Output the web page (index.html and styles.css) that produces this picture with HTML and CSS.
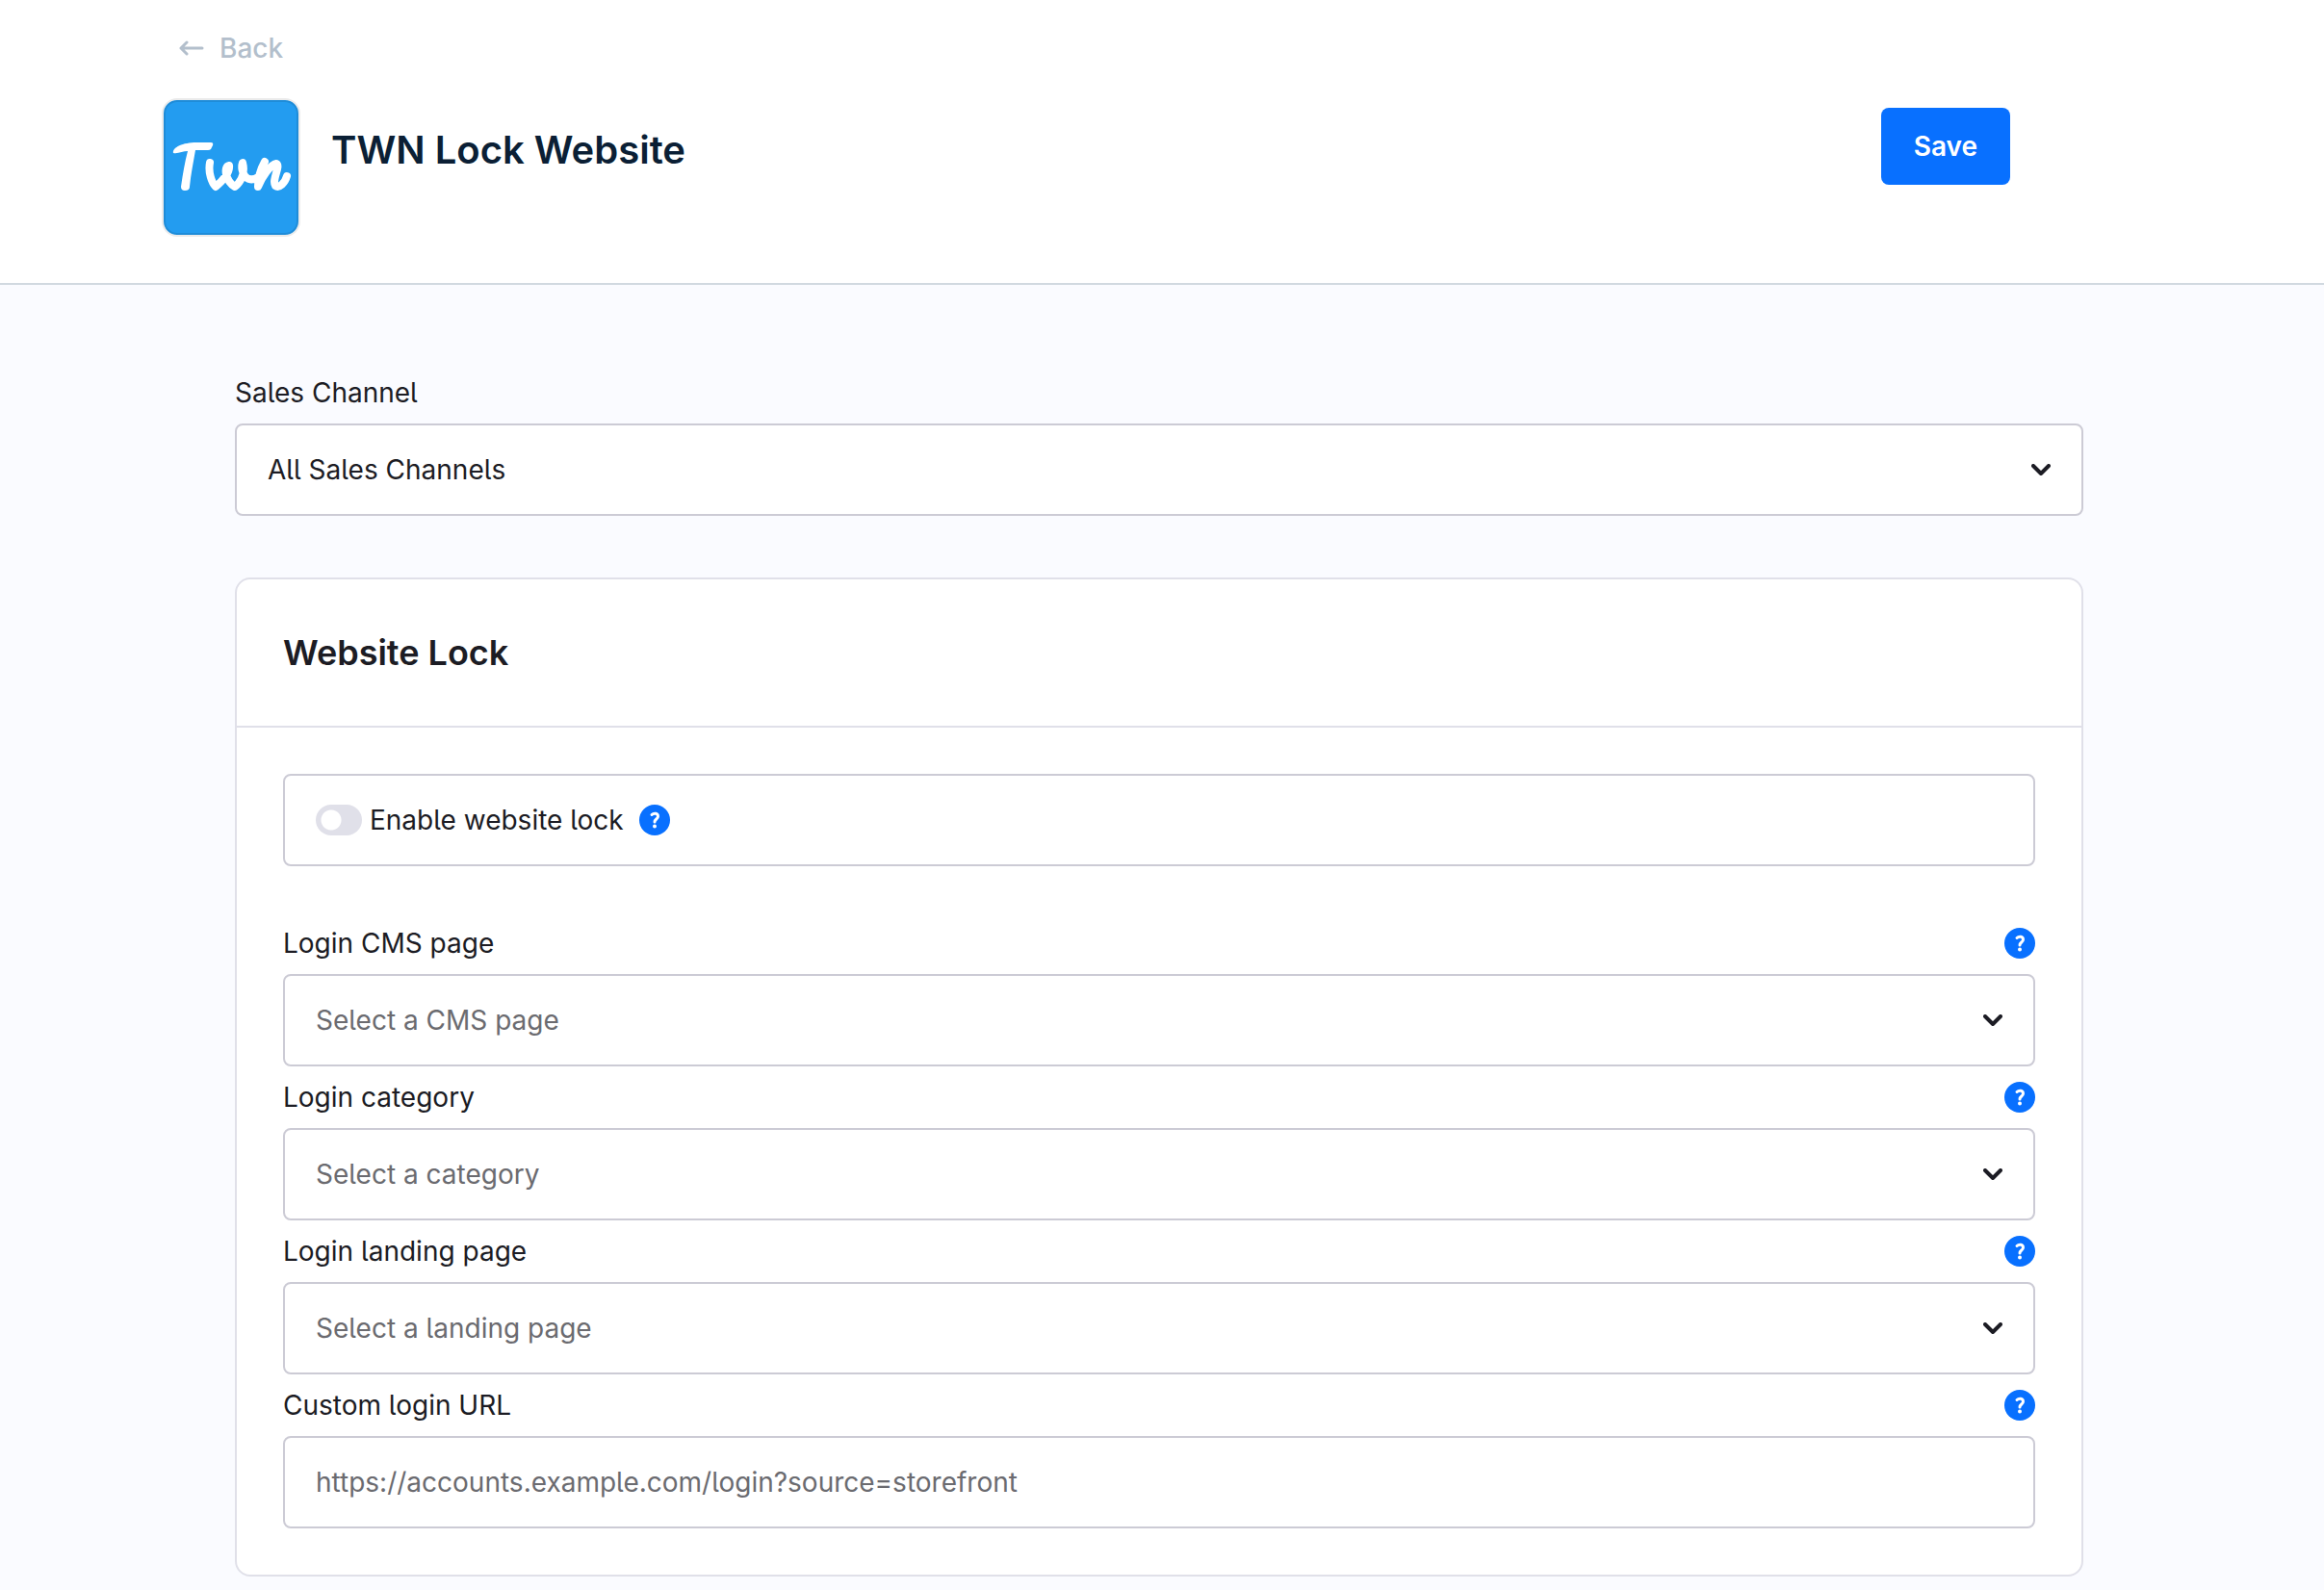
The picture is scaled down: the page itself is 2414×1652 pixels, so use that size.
FILE: index.html
```html
<!DOCTYPE html>
<html lang="en">
  <head>
    <meta charset="UTF-8">
    <title>TWN Lock Website</title>
    <link rel="stylesheet" href="styles.css">
  </head>

  <body>
    <header class="page-header">
      <a href="#" class="back-link">
        <svg class="back-arrow" viewBox="0 0 26 16" aria-hidden="true">
          <path d="M8 2 2 8l6 6M2 8h22"/>
        </svg>
        Back
      </a>

      <div class="header-row">
        <svg class="app-icon" viewBox="0 0 140 140" role="img" aria-label="Twn">
          <path class="logo-t" d="M10 55C9 49 20 44 34 44L49 44Q52 44 51 47L49 51Q48 52 46 52L33 52C31 64 28 78 27 90Q27 94 22 94Q18 94 18 90C20 76 22 64 25 53C20 53 15 56 10 55Z"/>
          <path class="logo-wn" d="M48 65C46 75 50 86 54 90C61 84 69 76 68 68C62 69 64 84 74 90C80 85 85 76 82 65C79 74 86 88 98 80M105 64C100 73 98 81 98 90C102 80 111 67 117 66C122 68 112 83 116 89C120 92 126 86 128 79"/>
        </svg>
        <h1 class="page-title">TWN Lock Website</h1>
        <button type="submit" form="lock-form" class="save-btn">Save</button>
      </div>
    </header>

    <main class="content">
      <form id="lock-form" class="lock-form">
        <div class="field">
          <div class="field-top">
            <label for="sales-channel">Sales Channel</label>
          </div>
          <div class="select-wrap">
            <select id="sales-channel" class="box">
              <option>All Sales Channels</option>
            </select>
            <svg class="chevron" viewBox="0 0 20 12" aria-hidden="true"><path d="M2 2l8 8 8-8"/></svg>
          </div>
        </div>

        <section class="card">
          <div class="card-header">
            <h2 class="card-title">Website Lock</h2>
          </div>

          <div class="card-body">
            <div class="box switch-box">
              <input type="checkbox" id="enable-lock" class="switch">
              <label for="enable-lock">Enable website lock</label>
              <button type="button" class="help" aria-label="Help">
                <svg viewBox="0 0 32 32" aria-hidden="true"><path d="M13 10.5C15 8.5 19.5 8.5 19.5 12.2C19.5 15 16 15 16 18"/><circle cx="16" cy="22.5" r="2"/></svg>
              </button>
            </div>

            <div class="field">
              <div class="field-top">
                <label for="cms-page">Login CMS page</label>
                <button type="button" class="help" aria-label="Help">
                  <svg viewBox="0 0 32 32" aria-hidden="true"><path d="M13 10.5C15 8.5 19.5 8.5 19.5 12.2C19.5 15 16 15 16 18"/><circle cx="16" cy="22.5" r="2"/></svg>
                </button>
              </div>
              <div class="select-wrap">
                <select id="cms-page" class="box placeholder">
                  <option>Select a CMS page</option>
                </select>
                <svg class="chevron" viewBox="0 0 20 12" aria-hidden="true"><path d="M2 2l8 8 8-8"/></svg>
              </div>
            </div>

            <div class="field">
              <div class="field-top">
                <label for="category">Login category</label>
                <button type="button" class="help" aria-label="Help">
                  <svg viewBox="0 0 32 32" aria-hidden="true"><path d="M13 10.5C15 8.5 19.5 8.5 19.5 12.2C19.5 15 16 15 16 18"/><circle cx="16" cy="22.5" r="2"/></svg>
                </button>
              </div>
              <div class="select-wrap">
                <select id="category" class="box placeholder">
                  <option>Select a category</option>
                </select>
                <svg class="chevron" viewBox="0 0 20 12" aria-hidden="true"><path d="M2 2l8 8 8-8"/></svg>
              </div>
            </div>

            <div class="field">
              <div class="field-top">
                <label for="landing-page">Login landing page</label>
                <button type="button" class="help" aria-label="Help">
                  <svg viewBox="0 0 32 32" aria-hidden="true"><path d="M13 10.5C15 8.5 19.5 8.5 19.5 12.2C19.5 15 16 15 16 18"/><circle cx="16" cy="22.5" r="2"/></svg>
                </button>
              </div>
              <div class="select-wrap">
                <select id="landing-page" class="box placeholder">
                  <option>Select a landing page</option>
                </select>
                <svg class="chevron" viewBox="0 0 20 12" aria-hidden="true"><path d="M2 2l8 8 8-8"/></svg>
              </div>
            </div>

            <div class="field">
              <div class="field-top">
                <label for="login-url">Custom login URL</label>
                <button type="button" class="help" aria-label="Help">
                  <svg viewBox="0 0 32 32" aria-hidden="true"><path d="M13 10.5C15 8.5 19.5 8.5 19.5 12.2C19.5 15 16 15 16 18"/><circle cx="16" cy="22.5" r="2"/></svg>
                </button>
              </div>
              <input type="text" id="login-url" class="box" placeholder="https://accounts.example.com/login?source=storefront">
            </div>
          </div>
        </section>
      </form>
    </main>
  </body>
</html>
```

FILE: styles.css
```css
* {
  box-sizing: border-box;
}

body {
  margin: 0;
  background: #fafbff;
  color: #1c1c24;
  font-family: Inter, "Liberation Sans", sans-serif;
  font-feature-settings: "cv05";
  font-size: 28px;
  line-height: 32px;
}

h1, h2 {
  margin: 0;
  font-weight: 600;
}

button, input, select {
  font: inherit;
  font-feature-settings: inherit;
  color: inherit;
}

/* header */
.page-header {
  padding: 34px 326px 48px 168px;
  background: #fff;
  border-bottom: 2px solid #d1d9e0;
}

.back-link {
  display: flex;
  align-items: center;
  gap: 16px;
  width: max-content;
  margin-left: 18px;
  color: #b3bfcc;
  font-weight: 500;
  text-decoration: none;
}

.back-arrow {
  width: 26px;
  height: 16px;
  fill: none;
  stroke: #b3bfcc;
  stroke-width: 3;
  stroke-linecap: round;
  stroke-linejoin: round;
}

.header-row {
  display: flex;
  align-items: flex-start;
  margin-top: 36px;
}

.app-icon {
  width: 144px;
  height: 144px;
  background: #239cf0;
  border: 2px solid #ebebeb;
  border-radius: 16px;
  box-shadow: inset 0 0 0 2px #1f8cd8;
}

.logo-t {
  fill: #fff;
}

.logo-wn {
  fill: none;
  stroke: #fff;
  stroke-width: 8;
  stroke-linecap: round;
  stroke-linejoin: round;
}

.page-title {
  flex: 1;
  margin: 30px 0 0 32px;
  color: #0b1f35;
  font-size: 40px;
  line-height: 48px;
}

.save-btn {
  height: 80px;
  margin-top: 10px;
  padding: 0 34px;
  background: #0870ff;
  border: 0;
  border-radius: 8px;
  color: #fff;
  font-weight: 600;
  cursor: pointer;
}

/* form */
.content {
  padding: 96px 6px 14px 0;
}

.lock-form {
  max-width: 1920px;
  margin: 0 auto;
}

.field-top {
  display: flex;
  align-items: center;
  justify-content: space-between;
  height: 32px;
  margin-bottom: 16px;
}

.box {
  display: block;
  width: 100%;
  height: 96px;
  padding: 0 32px;
  background: #fff;
  border: 2px solid #cccbd5;
  border-radius: 8px;
}

select.box {
  appearance: none;
}

.placeholder,
.box::placeholder {
  color: #6b6b70;
  opacity: 1;
}

.select-wrap {
  display: grid;
  align-items: center;
}

.select-wrap > * {
  grid-area: 1 / 1;
}

.chevron {
  width: 20px;
  height: 12px;
  margin-right: 34px;
  justify-self: end;
  fill: none;
  stroke: #1c1c24;
  stroke-width: 4;
  stroke-linecap: round;
  stroke-linejoin: round;
  pointer-events: none;
}

/* card */
.card {
  margin-top: 64px;
  background: #fff;
  border: 2px solid #e0e0e9;
  border-radius: 16px;
}

.card-header {
  padding: 56px 48px;
  border-bottom: 2px solid #e0e0e9;
}

.card-title {
  font-size: 36px;
  line-height: 40px;
}

.card-body {
  padding: 48px;
}

.card-body .field {
  margin-top: 16px;
}

.switch-box {
  display: flex;
  align-items: center;
  margin-bottom: 64px;
}

.switch {
  appearance: none;
  width: 48px;
  height: 32px;
  margin: 0 8px 0 0;
  background: radial-gradient(circle at 16px 16px, #fff 10px, #e0e0e9 11px);
  border-radius: 16px;
}

.switch:checked {
  background: radial-gradient(circle at 32px 16px, #fff 10px, #0870ff 11px);
}

.help {
  width: 32px;
  height: 32px;
  padding: 0;
  background: #0870ff;
  border: 0;
  border-radius: 50%;
  cursor: pointer;
}

.help svg {
  display: block;
  width: 32px;
  height: 32px;
  fill: #fff;
}

.help path {
  fill: none;
  stroke: #fff;
  stroke-width: 3;
  stroke-linecap: round;
}

.switch-box .help {
  margin-left: 16px;
}
```
